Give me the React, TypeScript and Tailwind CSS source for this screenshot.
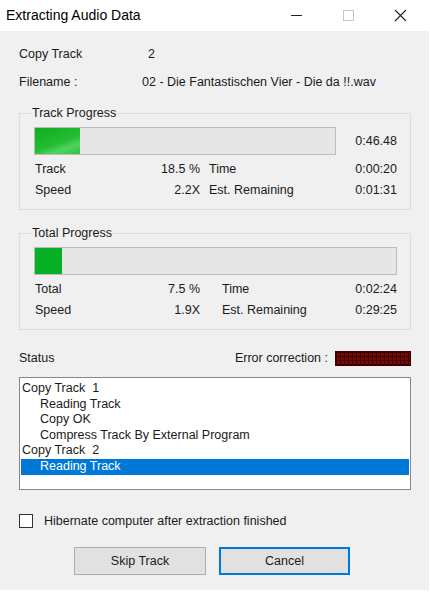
import React from 'react';

const font = "font-['Liberation_Sans',Arial,sans-serif]";

const StatRow = ({ label, value, label2, value2, split }: { label: string; value: string; label2: string; value2: string; split: string }) => (
  <div className="flex h-[21px] items-center text-[#1a1a1a]">
    <div className="flex w-[165px] justify-between">
      <span>{label}</span>
      <span>{value}</span>
    </div>
    <div className={`flex flex-1 justify-between ${split}`}>
      <span>{label2}</span>
      <span>{value2}</span>
    </div>
  </div>
);

const Group = ({ title, children }: { title: string; children: React.ReactNode }) => (
  <div className="relative h-[97px] border border-[#dcdcdc] pl-[14px] pr-[13px] pt-[13px]">
    <span className="absolute -top-[9px] left-[11px] bg-[#f0f0f0] px-[1px] leading-[16px] text-[#1a1a1a]">
      {title}
    </span>
    {children}
  </div>
);

const App: React.FC = () => {
  return (
    <div className={`h-[592px] w-[430px] bg-white ${font}`}>
      <div className="flex h-[590px] w-[429px] flex-col">
        {/* Title bar */}
        <div className="flex h-[31px] items-center bg-white pl-[6px]">
          <span className="flex-1 text-[14px] text-black">Extracting Audio Data</span>
          <div className="mr-[3px] flex h-full items-center">
            <div className="flex w-[52px] justify-center">
              <div className="h-[1px] w-[11px] bg-[#222]" />
            </div>
            <div className="flex w-[52px] justify-center">
              <div className="h-[11px] w-[11px] border border-[#c4c4c4]" />
            </div>
            <div className="flex w-[52px] justify-center">
              <svg width="13" height="13" viewBox="0 0 13 13">
                <path d="M1 1L12 12M12 1L1 12" stroke="#222" strokeWidth="1.1" />
              </svg>
            </div>
          </div>
        </div>

        {/* Body */}
        <div className="flex flex-1 flex-col bg-[#f0f0f0] pl-[19px] pr-[18px] text-[12.5px] text-[#1a1a1a]">
          <div className="mt-[15px] flex h-[16px] items-center">
            <span className="w-[128px]">Copy Track</span>
            <span className="ml-[1px]">2</span>
          </div>
          <div className="mt-[12px] flex h-[16px] items-center">
            <span className="w-[123px]">Filename :</span>
            <span>02 - Die Fantastischen Vier - Die da !!.wav</span>
          </div>

          <div className="mt-[23px]">
            <Group title="Track Progress">
              <div className="flex items-center">
                <div className="h-[28px] w-[302px] border border-[#bcbcbc] bg-[#e6e6e6]">
                  <div className="h-full w-[45px] bg-[linear-gradient(160deg,#0fae1f_0%,#22bd33_55%,#52d25e_75%,#2fc23c_100%)]" />
                </div>
                <span className="ml-auto">0:46.48</span>
              </div>
              <div className="mt-[4px] pl-[1px]">
                <StatRow label="Track" value="18.5 %" label2="Time" value2="0:00:20" split="pl-[9px]" />
                <StatRow label="Speed" value="2.2X" label2="Est. Remaining" value2="0:01:31" split="pl-[9px]" />
              </div>
            </Group>
          </div>

          <div className="mt-[23px]">
            <Group title="Total Progress">
              <div className="h-[28px] w-[363px] border border-[#bcbcbc] bg-[#e6e6e6]">
                <div className="h-full w-[27px] bg-[#06b025]" />
              </div>
              <div className="mt-[4px] pl-[1px]">
                <StatRow label="Total" value="7.5 %" label2="Time" value2="0:02:24" split="pl-[22px]" />
                <StatRow label="Speed" value="1.9X" label2="Est. Remaining" value2="0:29:25" split="pl-[22px]" />
              </div>
            </Group>
          </div>

          <div className="mt-[20px] flex h-[16px] items-center">
            <span className="flex-1">Status</span>
            <span className="mr-[7px]">Error correction :</span>
            <div className="h-[15px] w-[76px] border border-[#3a0000] bg-[#7d0606] bg-[linear-gradient(90deg,#3a0000_1px,transparent_1px),linear-gradient(#3a0000_1px,transparent_1px)] bg-[size:4px_4px]" />
          </div>

          <div className="mt-[11px] h-[113px] w-[392px] border border-[#828790] bg-white px-[1px] pt-[3px] leading-[15.6px]">
            <div className="pl-[1px]">Copy Track&nbsp; 1</div>
            <div className="pl-[19px]">Reading Track</div>
            <div className="pl-[19px]">Copy OK</div>
            <div className="pl-[19px]">Compress Track By External Program</div>
            <div className="pl-[1px]">Copy Track&nbsp; 2</div>
            <div className="bg-[#0078d7] pl-[19px] text-white">Reading Track</div>
          </div>

          <div className="mt-[24px] flex h-[14px] items-center">
            <div className="h-[14px] w-[14px] border border-[#333] bg-white" />
            <span className="ml-[11px]">Hibernate computer after extraction finished</span>
          </div>

          <div className="mt-[19px] flex pl-[55px]">
            <button className="h-[28px] w-[132px] border border-[#adadad] bg-[#e1e1e1] text-[#1a1a1a]">
              Skip Track
            </button>
            <button className="ml-[13px] h-[28px] w-[131px] border-2 border-[#0078d7] bg-[#e1e1e1] text-[#1a1a1a]">
              Cancel
            </button>
          </div>
        </div>
      </div>
    </div>
  );
};

export default App;
